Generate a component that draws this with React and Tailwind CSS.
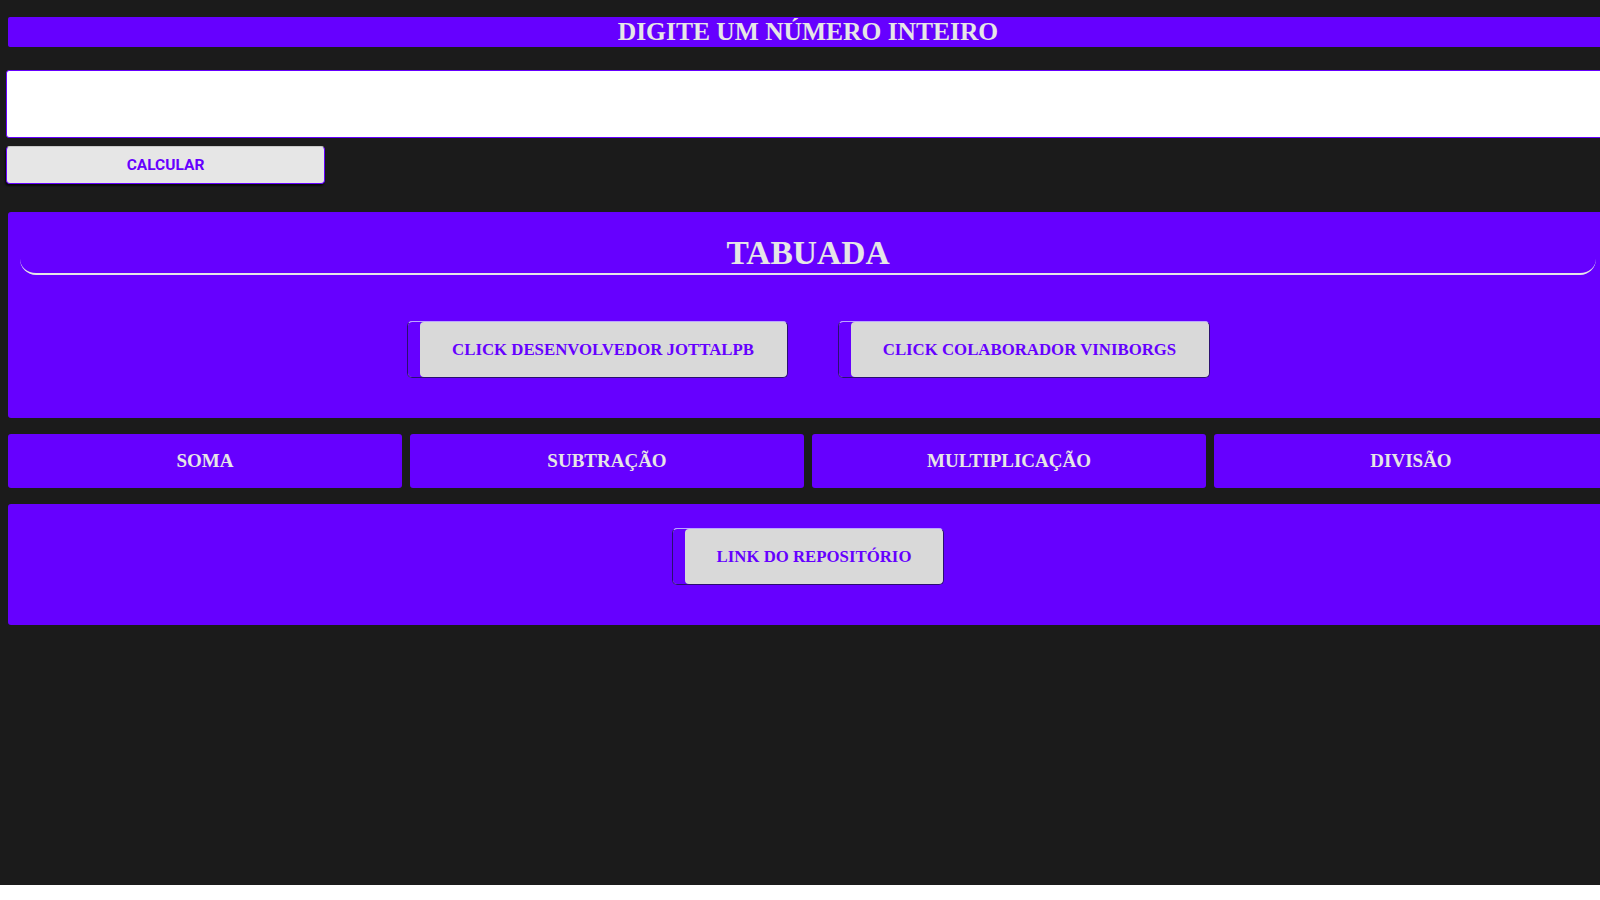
export default function App() {
  const serif = "font-['Liberation_Serif','Times_New_Roman',serif]";
  const ops = ["SOMA", "SUBTRAÇÃO", "MULTIPLICAÇÃO", "DIVISÃO"];

  const linkButton =
    "h-[57px] bg-[#d9d9d9] text-[#6600ff] font-bold text-[16.8px] rounded-[5px] border border-[#2a0f70] border-t-[#bca6ff] shadow-[inset_12px_0_0_#6600ff] pl-[12px] flex items-center justify-center " +
    serif;

  return (
    <div className={"w-[1616px] min-h-[885px] bg-[#1b1b1b] pt-[17px] px-2 " + serif}>
      <div className="h-[30px] bg-[#6600ff] rounded-[2px] flex items-center justify-center">
        <h1 className="text-[25.5px] font-bold text-[#e6e6e6] leading-none">
          DIGITE UM NÚMERO INTEIRO
        </h1>
      </div>

      <input
        type="number"
        className="block mt-[23px] -ml-[2px] w-[1610px] h-[68px] bg-white border border-[#6600ff] rounded-[3px] outline-none"
      />

      <button className="block mt-[8px] -ml-[2px] w-[319px] h-[38px] bg-[#e6e6e6] border border-[#6600ff] border-t-[#c8c8c8] rounded-[4px] shadow-[-1px_2px_2px_rgba(0,0,0,0.7)] text-[#6600ff] font-bold text-[15.5px] pt-[2px] font-['Roboto','Liberation_Sans',sans-serif]">
        CALCULAR
      </button>

      <section className="mt-[28px] h-[206px] bg-[#6600ff] rounded-[3px] pt-[23px]">
        <h2 className="mx-3 text-[33.5px] font-bold text-[#e6e6e6] leading-[36px] text-center pb-[2px] border-b-2 border-[#e6e6e6] rounded-b-[16px]">
          TABUADA
        </h2>
        <div className="mt-[46px] flex justify-center gap-[50px]">
          <button className={"w-[381px] " + linkButton}>CLICK DESENVOLVEDOR JOTTALPB</button>
          <button className={"w-[372px] " + linkButton}>CLICK COLABORADOR VINIBORGS</button>
        </div>
      </section>

      <div className="mt-4 grid grid-cols-4 gap-2">
        {ops.map((op) => (
          <button
            key={op}
            className={"h-[54px] bg-[#6600ff] rounded-[3px] text-[#e6e6e6] font-bold text-[19px] " + serif}
          >
            {op}
          </button>
        ))}
      </div>

      <section className="mt-4 h-[121px] bg-[#6600ff] rounded-[3px] pt-[24px] flex justify-center items-start">
        <button className={"w-[272px] " + linkButton}>LINK DO REPOSITÓRIO</button>
      </section>
    </div>
  );
}
